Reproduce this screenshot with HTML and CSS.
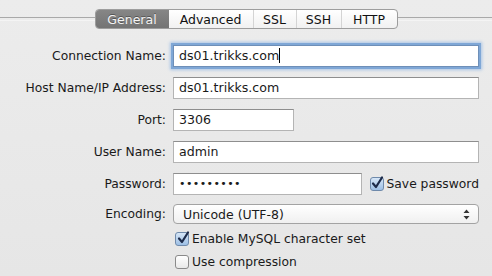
FILE: index.html
```html
<!DOCTYPE html>
<html lang="en">
<head>
  <meta charset="UTF-8" />
  <title>Connection</title>
  <link rel="stylesheet" href="styles.css">
</head>
<body>
  <div class="tabstrip">
    <div class="tabs">
      <div class="tab active">General</div>
      <div class="tab">Advanced</div>
      <div class="tab">SSL</div>
      <div class="tab">SSH</div>
      <div class="tab">HTTP</div>
    </div>
  </div>

  <div class="form">
    <label>Connection Name:</label>
    <div class="field focus">ds01.trikks.com<span class="caret"></span></div>

    <label>Host Name/IP Address:</label>
    <div class="field">ds01.trikks.com</div>

    <label>Port:</label>
    <div class="field port">3306</div>

    <label>User Name:</label>
    <div class="field">admin</div>

    <label>Password:</label>
    <div class="pw-row">
      <div class="field pw">&#8226;&#8226;&#8226;&#8226;&#8226;&#8226;&#8226;&#8226;&#8226;</div>
      <div class="check">
        <span class="box on">
          <svg width="14" height="14" viewBox="0 0 14 14"><path d="M3 7.5 L6 11 L12 1.5" fill="none" stroke="#1d2b4a" stroke-width="2.2" stroke-linecap="round" stroke-linejoin="round"/></svg>
        </span>
        Save password
      </div>
    </div>

    <label class="enc-label">Encoding:</label>
    <div class="popup">
      <span>Unicode (UTF-8)</span>
      <svg width="7" height="11" viewBox="0 0 7 11"><path d="M3.5 0.5 L6.5 4 L0.5 4 Z M3.5 10.5 L6.5 7 L0.5 7 Z" fill="#333"/></svg>
    </div>

    <span></span>
    <div class="check opt first">
      <span class="box on">
        <svg width="14" height="14" viewBox="0 0 14 14"><path d="M3 7.5 L6 11 L12 1.5" fill="none" stroke="#1d2b4a" stroke-width="2.2" stroke-linecap="round" stroke-linejoin="round"/></svg>
      </span>
      Enable MySQL character set
    </div>

    <span></span>
    <div class="check opt">
      <span class="box"></span>
      Use compression
    </div>
  </div>
</body>
</html>
```

FILE: styles.css
```css
* {
  box-sizing: border-box;
}
body {
  margin: 0;
  width: 492px;
  height: 276px;
  overflow: hidden;
  background: linear-gradient(#ececec, #e6e6e6);
  font-family: 'DejaVu Sans', sans-serif;
  font-size: 12.3px;
  color: #1a1a1a;
}
.tabstrip {
  display: flex;
  align-items: center;
  margin-top: 9px;
}
.tabstrip::before,
.tabstrip::after {
  content: '';
  flex: 1;
  height: 2px;
  border-top: 1px solid #a9a9a9;
  border-bottom: 1px solid #f4f4f4;
}
.tabs {
  display: flex;
  height: 20px;
  border: 1px solid #9d9d9d;
  border-radius: 4px;
  background: linear-gradient(#ffffff, #f1f1f1);
  overflow: hidden;
  font-size: 12.5px;
}
.tab {
  display: flex;
  align-items: center;
  justify-content: center;
  border-left: 1px solid #d4d4d4;
  color: #111;
}
.tab:nth-child(1) { width: 73px; border-left: none; }
.tab:nth-child(2) { width: 84px; border-left: none; }
.tab:nth-child(3) { width: 43px; }
.tab:nth-child(4) { width: 45px; }
.tab:nth-child(5) { width: 56px; }
.tab.active {
  background: linear-gradient(#868686, #747474);
  color: #f4f4f4;
  text-shadow: 0 -1px 0 #555;
}
.form {
  display: grid;
  grid-template-columns: 166px 306px;
  column-gap: 7px;
  row-gap: 10px;
  margin-top: 15px;
  align-items: center;
}
label {
  text-align: right;
  white-space: nowrap;
}
.field {
  height: 22px;
  background: #fff;
  border: 1px solid #b4b4b4;
  border-top-color: #8e8e8e;
  padding: 0 5px;
  line-height: 20px;
  font-size: 12.6px;
  white-space: nowrap;
}
.field.focus {
  margin-top: 1px;
  box-shadow: 0 0 0 2px #7fa7d6, 0 0 3px 3px #a8c4e6;
  border-color: #6e8fb8;
}
.caret {
  display: inline-block;
  width: 1px;
  height: 15px;
  background: #000;
  vertical-align: -3px;
}
.port {
  width: 121px;
}
.pw-row {
  display: flex;
  align-items: center;
  white-space: nowrap;
}
.pw {
  width: 189px;
  font-size: 11px;
  letter-spacing: 0.4px;
  padding-left: 5px;
}
.pw-row .check {
  margin-left: 8px;
}
.check {
  display: flex;
  align-items: center;
  gap: 3px;
  font-size: 12.3px;
  white-space: nowrap;
}
.box {
  flex: none;
  width: 14px;
  height: 14px;
  border: 1px solid #8a8a8a;
  border-radius: 3px;
  background: linear-gradient(#ffffff, #e9e9e9);
  display: flex;
  align-items: center;
  justify-content: center;
}
.box.on {
  background: linear-gradient(#d6e6f7, #9dbfe5);
  border-color: #6f8aab;
}
.box svg {
  margin-top: -2px;
  margin-left: 1px;
  overflow: visible;
}
.popup {
  height: 20px;
  margin-top: -1px;
  border: 1px solid #a3a3a3;
  border-radius: 4px;
  background: linear-gradient(#ffffff, #f0f0f0);
  display: flex;
  align-items: center;
  justify-content: space-between;
  padding: 0 8px 0 9px;
  font-size: 12.5px;
}
.enc-label {
  margin-top: -1px;
}
.opt {
  margin-top: -1px;
  margin-left: 2px;
}
.opt.first {
  margin-top: -2px;
}
```
